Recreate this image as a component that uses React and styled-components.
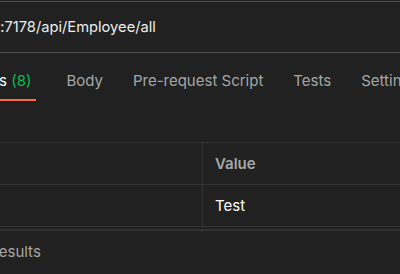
import React from "react";
import styled, { createGlobalStyle } from "styled-components";

const GlobalStyle = createGlobalStyle`
  body {
    margin: 0;
    background: #212121;
    font-family: Inter, "Noto Sans", sans-serif;
    overflow: hidden;
  }
`;

const Frame = styled.div`
  width: 400px;
  height: 274px;
  overflow: hidden;
  background: #212121;
  padding-top: 1px;
  box-sizing: border-box;
`;

const UrlBar = styled.div`
  height: 50px;
  border-top: 1px solid #4d4d4d;
  border-bottom: 1px solid #4d4d4d;
  display: flex;
  align-items: center;
  overflow: hidden;
`;

const UrlText = styled.span`
  margin-left: ${({ $offset }) => $offset}px;
  font-size: 14.7px;
  color: #ededed;
  white-space: nowrap;
`;

const TabBar = styled.div`
  display: flex;
  gap: 30px;
  margin-left: ${({ $offset }) => $offset}px;
  white-space: nowrap;
`;

const Tab = styled.div`
  padding: 18px ${({ $active }) => ($active ? "5px" : "0")} 8px;
  line-height: 20px;
  font-size: 15px;
  color: ${({ $active }) => ($active ? "#ffffff" : "#a6a6a6")};
  border-bottom: 2px solid ${({ $active }) => ($active ? "#ff6c37" : "transparent")};
`;

const Count = styled.span`
  color: #0cbb52;
`;

const Table = styled.div`
  margin-top: 41px;
  margin-left: -200px;
  border-top: 1px solid #333333;
  border-bottom: 1px solid #333333;
`;

const Row = styled.div`
  display: grid;
  grid-template-columns: 402px 1fr;
  height: 41px;
  & + & {
    border-top: 1px solid #333333;
  }
`;

const Cell = styled.div`
  display: flex;
  align-items: center;
  padding-left: 12px;
  font-size: 15px;
  color: ${({ $head }) => ($head ? "#a6a6a6" : "#ffffff")};
  font-weight: ${({ $head }) => ($head ? 600 : 400)};
  & + & {
    border-left: 1px solid #333333;
  }
`;

const Footer = styled.div`
  margin-top: 2px;
  border-top: 2px solid #333333;
  height: 40px;
  display: flex;
  align-items: center;
  overflow: hidden;
`;

const FooterText = styled.span`
  margin-left: ${({ $offset }) => $offset}px;
  font-size: 15px;
  color: #a6a6a6;
  white-space: nowrap;
`;

const tabs = ["Body", "Pre-request Script", "Tests", "Settings"];

export default function App() {
  return (
    <Frame>
      <GlobalStyle />
      <UrlBar>
        <UrlText $offset={-112}>https://localhost:7178/api/Employee/all</UrlText>
      </UrlBar>
      <TabBar $offset={-58}>
        <Tab $active>
          Headers <Count>(8)</Count>
        </Tab>
        {tabs.map((t) => (
          <Tab key={t}>{t}</Tab>
        ))}
      </TabBar>
      <Table>
        <Row>
          <Cell $head>Key</Cell>
          <Cell $head>Value</Cell>
        </Row>
        <Row>
          <Cell>Test</Cell>
          <Cell>Test</Cell>
        </Row>
      </Table>
      <Footer>
        <FooterText $offset={-45}>Test Results</FooterText>
      </Footer>
    </Frame>
  );
}
